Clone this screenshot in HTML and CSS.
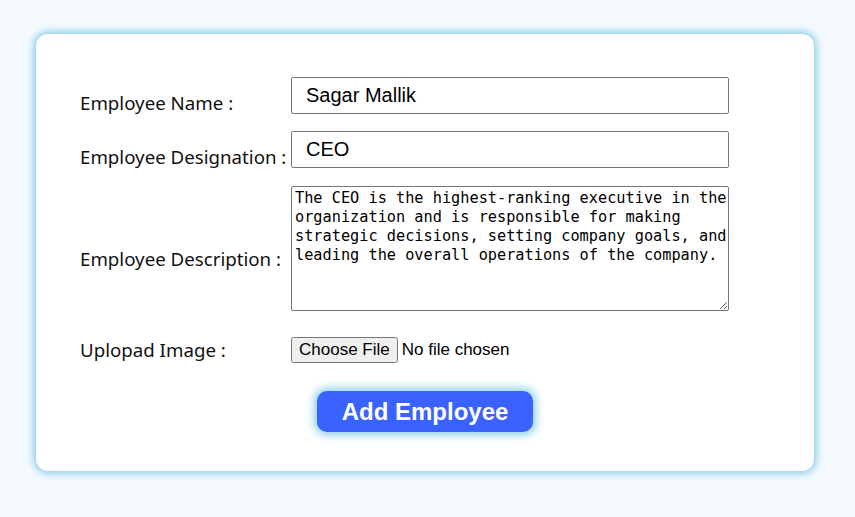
FILE: index.html
```html
<!DOCTYPE html>
<html>
<head>
<meta charset="utf-8">
<link rel="stylesheet" href="styles.css">
</head>
<body>
<div class="card">
  <form class="form">
    <div class="row row-name">
      <label class="label">Employee Name :</label>
      <input class="field" type="text" value="Sagar Mallik">
    </div>
    <div class="row row-desig">
      <label class="label">Employee Designation :</label>
      <input class="field" type="text" value="CEO">
    </div>
    <div class="row row-desc">
      <label class="label">Employee Description :</label>
      <textarea class="area">The CEO is the highest-ranking executive in the organization and is responsible for making strategic decisions, setting company goals, and leading the overall operations of the company.</textarea>
    </div>
    <div class="row row-file">
      <label class="label">Uplopad Image :</label>
      <input class="file" type="file">
    </div>
    <div class="actions">
      <button class="btn" type="button">Add Employee</button>
    </div>
  </form>
</div>
</body>
</html>
```

FILE: styles.css
```css
html, body {
  margin: 0;
  padding: 0;
}
body {
  background: #f5faff;
  width: 855px;
  height: 517px;
  overflow: hidden;
  padding-top: 34px;
  padding-left: 36px;
  box-sizing: border-box;
}
.card {
  width: 778px;
  height: 437px;
  box-sizing: border-box;
  background: #ffffff;
  border-radius: 12px;
  box-shadow: 0 0 9px 2px #7cc6e4;
  padding: 42px 0 0 44px;
}
.form {
  display: flex;
  flex-direction: column;
}
.row {
  display: grid;
  grid-template-columns: 211px 438px;
  align-items: center;
}
.row-name {
  margin-top: 1px;
}
.label {
  font-family: "Noto Sans", "Open Sans", sans-serif;
  font-size: 18.7px;
  line-height: 24px;
  color: #111;
}
.field {
  box-sizing: border-box;
  width: 438px;
  height: 37px;
  margin: 0 0 15px 0;
  border: 1px solid #767676;
  border-radius: 2px;
  padding: 0 14px;
  font-family: "Liberation Sans", Arial, sans-serif;
  font-size: 20px;
  color: #000;
  outline: none;
}
.row-desig {
  margin-top: 2px;
}
.row-desc {
  margin-top: 3px;
}
.area {
  display: block;
  box-sizing: border-box;
  width: 438px;
  height: 125px;
  margin: 0 0 20px 0;
  border: 1px solid #767676;
  border-radius: 2px;
  padding: 2px 0 2px 3px;
  font-family: "DejaVu Sans Mono", monospace;
  font-size: 15.25px;
  line-height: 19px;
  color: #000;
  resize: both;
  overflow: hidden;
  outline: none;
}
.row-file {
  margin-top: 6px;
}
.file {
  font-family: "Liberation Sans", Arial, sans-serif;
  font-size: 17px;
  color: #000;
}
.actions {
  display: flex;
  justify-content: flex-start;
  padding-left: 237px;
  margin-top: 28px;
}
.btn {
  width: 216px;
  height: 41px;
  border: none;
  border-radius: 10px;
  background: #3a62ff;
  color: #ffffff;
  font-family: "Liberation Sans", Arial, sans-serif;
  font-weight: bold;
  font-size: 24px;
  box-shadow: 0 0 8px 3px #8ccfea;
  padding: 0;
  cursor: pointer;
}
```
